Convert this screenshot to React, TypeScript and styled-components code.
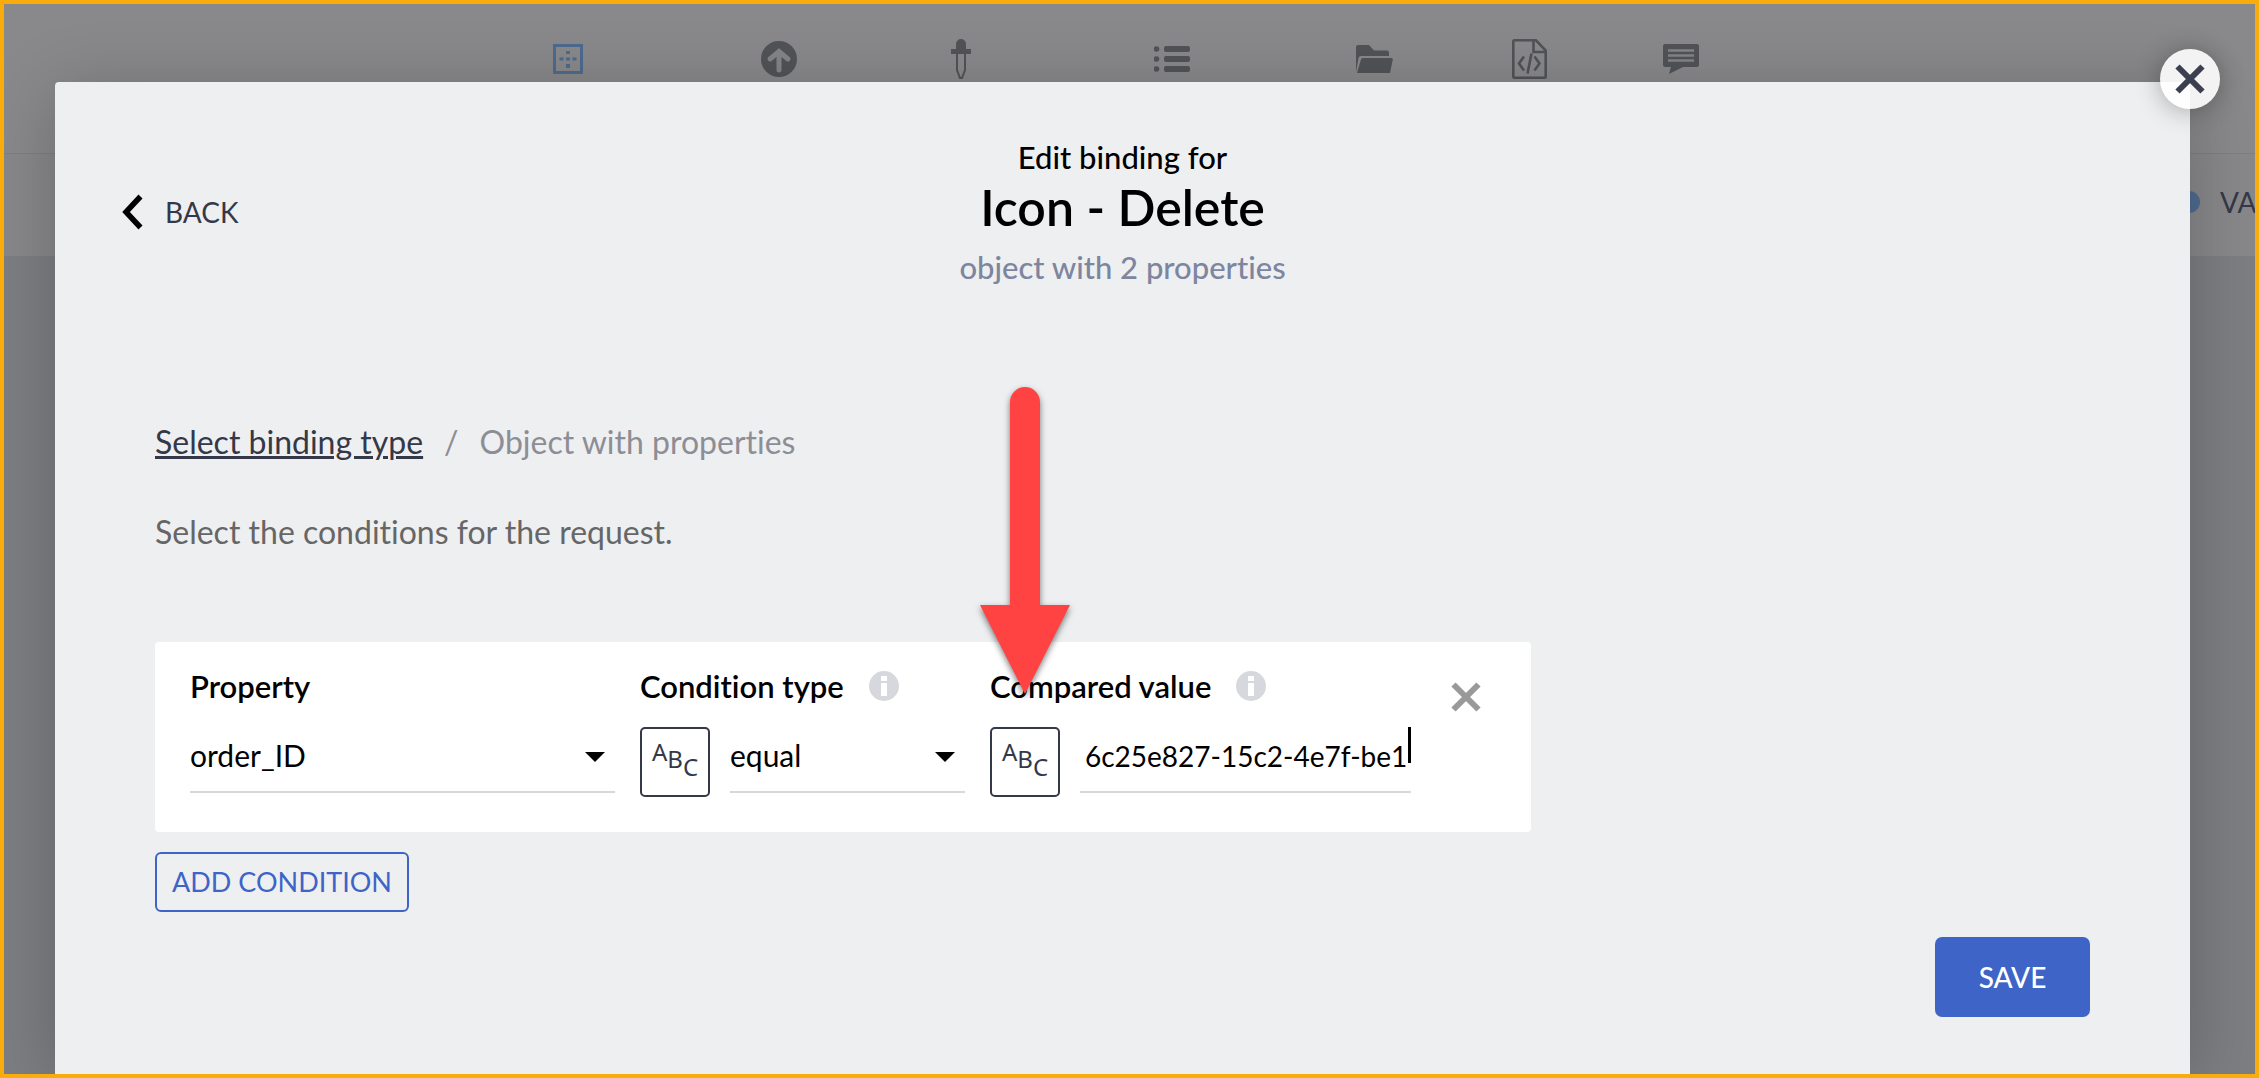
import React from 'react';
import styled, { createGlobalStyle } from 'styled-components';

const ink = '#343848';
const blue = '#3e64c8';
const toolGrey = '#525357';

const GlobalStyle = createGlobalStyle`
  *, *::before, *::after { box-sizing: border-box; }
  body {
    margin: 0;
    font-family: Lato, "Noto Sans", sans-serif;
    font-size: 28px;
    line-height: 34px;
    font-variant-ligatures: none;
    color: #000;
  }
  button, input, select { font: inherit; color: inherit; }
`;

const Frame = styled.div`
  position: relative;
  display: flex;
  flex-direction: column;
  min-height: 100vh;
  overflow: hidden;
  border: 4px solid #faad0a;
  background: #7c7e82;
`;

const TopBar = styled.header`
  display: flex;
  justify-content: center;
  height: 149px;
  padding-right: 50px;
  background: #89898b;
`;

const Tool = styled.button<{ $width: number; $active?: boolean }>`
  display: flex;
  align-items: center;
  justify-content: center;
  width: ${(p) => p.$width}px;
  height: 110px;
  padding: 0;
  border: 0;
  background: none;
  color: ${(p) => (p.$active ? '#4d6b8f' : toolGrey)};
`;

const SubBar = styled.div`
  display: flex;
  align-items: center;
  justify-content: flex-end;
  gap: 20px;
  height: 103px;
  padding-bottom: 6px;
  border-top: 1px solid #7f7f81;
  background: #888789;
  color: ${ink};
  white-space: nowrap;
`;

const Dot = styled.span`
  width: 22px;
  height: 22px;
  border-radius: 50%;
  background: #4d6b8f;
`;

const Clip = styled.span`
  width: 35px;
  overflow: hidden;
`;

const Overlay = styled.div`
  position: absolute;
  inset: 0;
  display: flex;
  padding: 78px 65px 0 51px;
`;

const Modal = styled.section`
  position: relative;
  flex: 1;
  padding: 57px 100px 0;
  border-radius: 4px 4px 0 0;
  background: #eeeff1;
  box-shadow: 0 10px 70px rgba(0, 0, 0, 0.22);
`;

const CloseBadge = styled.button`
  position: absolute;
  top: -33px;
  right: -30px;
  display: flex;
  align-items: center;
  justify-content: center;
  width: 60px;
  height: 60px;
  padding: 0;
  border: 0;
  border-radius: 50%;
  background: rgba(255, 255, 255, 0.9);
  box-shadow: 0 2px 26px rgba(0, 0, 0, 0.3);
  color: #3b3f50;
`;

const ModalHeader = styled.div`
  display: grid;
  grid-template-columns: 1fr auto 1fr;
  align-items: center;
  margin: 0 -33px;
`;

const BackButton = styled.button`
  display: flex;
  align-items: center;
  justify-self: start;
  gap: 22px;
  padding: 0;
  border: 0;
  background: none;
  color: ${ink};
`;

const Heading = styled.div`
  font-size: 31px;
  line-height: 36px;
  text-align: center;
`;

const Eyebrow = styled.p`
  margin: 0;
  font-weight: 500;
`;

const Title = styled.h1`
  margin: 0;
  font-size: 50px;
  font-weight: 600;
  line-height: 64px;
`;

const Subtitle = styled.p`
  margin: 10px 0 0;
  font-weight: 500;
  color: #7d859f;
`;

const Breadcrumb = styled.nav`
  display: flex;
  gap: 21px;
  margin-top: 139px;
  font-size: 32px;
  line-height: 36px;
  color: #8d8e95;
`;

const Crumb = styled.a`
  color: ${ink};
  text-decoration: underline;
  text-decoration-thickness: 3px;
`;

const Lead = styled.p`
  margin: 54px 0 92px;
  font-size: 32px;
  line-height: 36px;
  color: #666;
`;

const Card = styled.div`
  display: flex;
  align-items: flex-start;
  gap: 25px;
  width: 100%;
  max-width: 1376px;
  padding: 26px 50px 35px 35px;
  border-radius: 4px;
  background: #fff;
`;

const Field = styled.div<{ $basis: number }>`
  display: flex;
  flex: ${(p) => p.$basis} 1 0;
  flex-direction: column;
  gap: 23px;
  min-width: 0;
`;

const LabelRow = styled.div`
  display: flex;
  align-items: center;
  gap: 25px;
  height: 36px;
  font-size: 31px;
  font-weight: 600;
  line-height: 36px;
  white-space: nowrap;
`;

const Info = styled.button`
  display: flex;
  width: 30px;
  height: 30px;
  padding: 0;
  border: 0;
  border-radius: 50%;
  background: none;
`;

const ControlRow = styled.div`
  display: flex;
  align-items: flex-start;
  gap: 20px;
  height: 70px;
`;

const TypeChip = styled.button`
  display: flex;
  flex: none;
  justify-content: center;
  width: 70px;
  height: 70px;
  padding: 7px 0 0;
  border: 2px solid ${ink};
  border-radius: 5px;
  background: #fff;
  color: ${ink};
  font-family: "Noto Sans", sans-serif;
  font-size: 24px;
  line-height: 32px;
`;

const Step = styled.span<{ $drop: number }>`
  padding-top: ${(p) => p.$drop}px;
`;

const SelectBox = styled.div`
  display: grid;
  flex: 1;
  align-items: center;
  height: 66px;
  border-bottom: 2px solid #d7d8dc;

  > * { grid-area: 1 / 1; }
  > svg { justify-self: end; margin: 0 10px 4px 0; pointer-events: none; }
`;

const Select = styled.select`
  width: 100%;
  height: 64px;
  padding: 10px 40px 18px 0;
  border: 0;
  outline: 0;
  appearance: none;
  background: none;
  font-size: 30px;
  line-height: 36px;
`;

const InputBox = styled.div`
  position: relative;
  display: flex;
  flex: 1;
  min-width: 0;
  height: 66px;
  padding: 0 5px;
  border-bottom: 2px solid #d7d8dc;
`;

const Input = styled.input`
  width: 100%;
  min-width: 0;
  padding: 12px 0 18px;
  border: 0;
  outline: 0;
  background: none;
`;

const Caret = styled.span`
  position: absolute;
  top: 0;
  right: 0;
  width: 3px;
  height: 36px;
  background: #000;
`;

const RemoveButton = styled.button`
  display: flex;
  margin: 14px 0 0 15px;
  padding: 0;
  border: 0;
  background: none;
  color: #999;
`;

const AddButton = styled.button`
  display: block;
  height: 60px;
  margin-top: 20px;
  padding: 0 15px;
  border: 2px solid ${blue};
  border-radius: 6px;
  background: none;
  color: ${blue};
  font-size: 27px;
`;

const Actions = styled.div`
  display: flex;
  justify-content: flex-end;
  margin-top: 25px;
`;

const SaveButton = styled.button`
  width: 155px;
  height: 80px;
  border: 0;
  border-radius: 7px;
  background: ${blue};
  color: #fff;
  font-weight: 500;
`;

const Pointer = styled.svg`
  position: absolute;
  top: 299px;
  left: 919px;
  overflow: visible;
  filter: drop-shadow(0 3px 3px rgba(0, 0, 0, 0.5));
  pointer-events: none;
`;

const Cross = ({ size, weight }: { size: number; weight: number }) => (
  <svg width={size} height={size} viewBox="0 0 30 30" aria-hidden="true">
    <path d="M2.5 2.5 27.5 27.5M27.5 2.5 2.5 27.5" stroke="currentColor" strokeWidth={weight} fill="none" />
  </svg>
);

const Triangle = () => (
  <svg width="20" height="10" viewBox="0 0 20 10" aria-hidden="true">
    <path d="M0 0h20L10 10z" />
  </svg>
);

const InfoIcon = () => (
  <svg width="30" height="30" viewBox="0 0 30 30" aria-hidden="true">
    <circle cx="15" cy="15" r="15" fill="#d7d8dd" />
    <path d="M12 5h6v5h-6zM12 12h6v13h-6z" fill="#fff" />
  </svg>
);

const Abc = ({ name }: { name: string }) => (
  <TypeChip aria-label={name}>
    <Step $drop={0}>A</Step>
    <Step $drop={7}>B</Step>
    <Step $drop={15}>C</Step>
  </TypeChip>
);

const tools = [
  {
    name: 'Layout', width: 220, active: true,
    icon: (
      <svg width="30" height="30" viewBox="0 0 30 30" fill="currentColor">
        <path d="M0 0h30v30H0zM3 3v24h24V3z" fillRule="evenodd" />
        <path d="M13 7h4v3h-4zM13 13.500h4v3h-4zM13 20h4v4h-4zM6.500 13.500h4v3h-4zM19.500 13.500h4v3h-4z" />
      </svg>
    ),
  },
  {
    name: 'Publish', width: 202,
    icon: (
      <svg width="36" height="36" viewBox="0 0 36 36">
        <circle cx="18" cy="18" r="18" fill="currentColor" />
        <path d="M18 29V11M9 18l9-7.500 9 7.500" fill="none" stroke="#858587" strokeWidth="5" strokeLinecap="round" strokeLinejoin="miter" />
      </svg>
    ),
  },
  {
    name: 'Colors', width: 162,
    icon: (
      <svg width="20" height="40" viewBox="0 0 20 40">
        <path d="M5 10V5a5 5 0 0 1 10 0v5h5v5H0v-5z" fill="currentColor" />
        <path d="M6 14v17l3 8h2l3-8V14" fill="none" stroke="currentColor" strokeWidth="2" />
      </svg>
    ),
  },
  {
    name: 'List', width: 260,
    icon: (
      <svg width="36" height="28" viewBox="0 0 36 28" fill="currentColor">
        {[1, 11, 21].map((y) => (
          <g key={y}>
            <circle cx="2.500" cy={y + 3} r="2.800" />
            <rect x="10" y={y} width="26" height="6" rx="2" />
          </g>
        ))}
      </svg>
    ),
  },
  {
    name: 'Files', width: 145,
    icon: (
      <svg width="37" height="28" viewBox="0 0 37 28" fill="currentColor">
        <path d="M0 27V2q0-2 2-2h11l5 5.500h13q2 0 2 2V11H5q-2 0-2.500 2z" />
        <path d="M1 28l4-13.500q.5-1.500 2-1.500h28q2 0 1.800 1.500L34 28z" />
      </svg>
    ),
  },
  {
    name: 'Code', width: 164,
    icon: (
      <svg width="35" height="40" viewBox="0 0 35 40" fill="none" stroke="currentColor" strokeWidth="2.600">
        <path d="M2.500 1.300H24L33.700 11.500v26q0 1.200-1.200 1.200h-30q-1.200 0-1.200-1.200v-35q0-1.200 1.200-1.200zM21.500 1.300v11.700h12" />
        <path d="M12 17.500 7 24.500l5 7M22.500 17.500l5 7-5 7M19.500 14.500l-4 20" />
      </svg>
    ),
  },
  {
    name: 'Comments', width: 140,
    icon: (
      <svg width="36" height="30" viewBox="0 0 36 30">
        <path d="M2 0h32q2 0 2 2v19q0 2-2 2H20L6 30l2-7H2q-2 0-2-2V2q0-2 2-2z" fill="currentColor" />
        <path d="M5 6.500h26M5 11.500h26M5 16.500h26" stroke="#858587" strokeWidth="2.400" />
      </svg>
    ),
  },
];

export default function App() {
  return (
    <>
      <GlobalStyle />
      <Frame>
        <TopBar>
          {tools.map((t) => (
            <Tool key={t.name} aria-label={t.name} $width={t.width} $active={t.active}>
              {t.icon}
            </Tool>
          ))}
        </TopBar>
        <SubBar>
          <Dot />
          <Clip>VA</Clip>
        </SubBar>

        <Overlay>
          <Modal role="dialog" aria-labelledby="binding-title">
            <ModalHeader>
              <BackButton>
                <svg width="21" height="36" viewBox="0 0 21 36" aria-hidden="true">
                  <path d="M18.500 2.500 4 18l14.500 15.500" fill="none" stroke="#000" strokeWidth="5.500" />
                </svg>
                BACK
              </BackButton>
              <Heading>
                <Eyebrow>Edit binding for</Eyebrow>
                <Title id="binding-title">Icon - Delete</Title>
                <Subtitle>object with 2 properties</Subtitle>
              </Heading>
            </ModalHeader>

            <Breadcrumb>
              <Crumb href="#type">Select binding type</Crumb>
              <span>/</span>
              <span>Object with properties</span>
            </Breadcrumb>
            <Lead>Select the conditions for the request.</Lead>

            <Card>
              <Field $basis={425}>
                <LabelRow>
                  <label htmlFor="property">Property</label>
                </LabelRow>
                <ControlRow>
                  <SelectBox>
                    <Select id="property" defaultValue="order_ID">
                      <option>order_ID</option>
                    </Select>
                    <Triangle />
                  </SelectBox>
                </ControlRow>
              </Field>

              <Field $basis={325}>
                <LabelRow>
                  <label htmlFor="condition">Condition type</label>
                  <Info aria-label="About condition type"><InfoIcon /></Info>
                </LabelRow>
                <ControlRow>
                  <Abc name="Condition format" />
                  <SelectBox>
                    <Select id="condition" defaultValue="equal">
                      <option>equal</option>
                    </Select>
                    <Triangle />
                  </SelectBox>
                </ControlRow>
              </Field>

              <Field $basis={421}>
                <LabelRow>
                  <label htmlFor="compared">Compared value</label>
                  <Info aria-label="About compared value"><InfoIcon /></Info>
                </LabelRow>
                <ControlRow>
                  <Abc name="Value format" />
                  <InputBox>
                    <Input id="compared" type="text" defaultValue="6c25e827-15c2-4e7f-be1" />
                    <Caret />
                  </InputBox>
                </ControlRow>
              </Field>

              <RemoveButton aria-label="Remove condition"><Cross size={30} weight={6} /></RemoveButton>
            </Card>

            <AddButton>ADD CONDITION</AddButton>
            <Actions>
              <SaveButton>SAVE</SaveButton>
            </Actions>

            <CloseBadge aria-label="Close"><Cross size={30} weight={6} /></CloseBadge>

            <Pointer width="102" height="320" viewBox="0 0 102 320" aria-hidden="true">
              <path d="M36 21a15 15 0 0 1 30 0v203h30L51 313 6 224h30z" fill="#ff4343" />
            </Pointer>
          </Modal>
        </Overlay>
      </Frame>
    </>
  );
}
